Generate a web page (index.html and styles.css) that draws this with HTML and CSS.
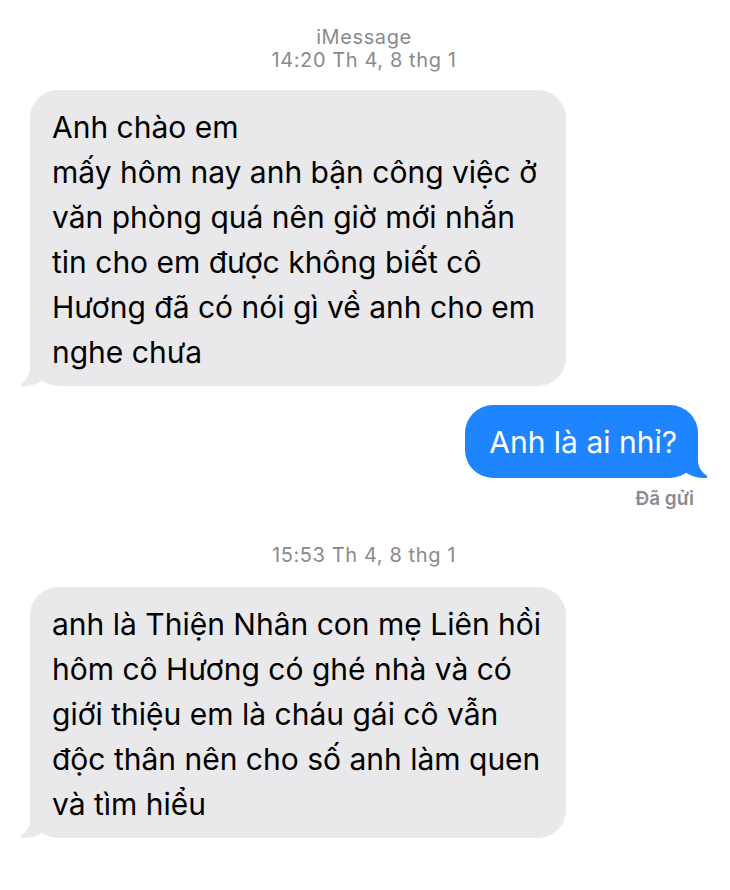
FILE: index.html
```html
<!DOCTYPE html>
<html lang="vi">
<head>
    <meta charset="UTF-8">
    <title>iMessage</title>
    <link rel="stylesheet" href="styles.css">
</head>
<body>

    <div class="chat">
        <div class="stamp stamp-first">
            <div>iMessage</div>
            <div>14:20 Th 4, 8 thg 1</div>
        </div>

        <div class="bubble received">
            Anh chào em<br>
            mấy hôm nay anh bận công việc ở<br>
            văn phòng quá nên giờ mới nhắn<br>
            tin cho em được không biết cô<br>
            Hương đã có nói gì về anh cho em<br>
            nghe chưa
        </div>

        <div class="bubble sent">Anh là ai nhỉ?</div>
        <div class="status">Đã gửi</div>

        <div class="stamp stamp-second">
            <div>15:53 Th 4, 8 thg 1</div>
        </div>

        <div class="bubble received">
            anh là Thiện Nhân con mẹ Liên hồi<br>
            hôm cô Hương có ghé nhà và có<br>
            giới thiệu em là cháu gái cô vẫn<br>
            độc thân nên cho số anh làm quen<br>
            và tìm hiểu
        </div>
    </div>

</body>
</html>
```

FILE: styles.css
```css
body {
    margin: 0;
    background: #fff;
    font-family: Inter, "Noto Sans", "DejaVu Sans", sans-serif;
    -webkit-font-smoothing: antialiased;
}
.chat {
    display: flex;
    flex-direction: column;
    width: 730px;
    padding: 26px 32px 0 30px;
    box-sizing: border-box;
}
.stamp {
    align-self: center;
    text-align: center;
    font-size: 20px;
    line-height: 23px;
    letter-spacing: 0.6px;
    color: #8a8a8e;
}
.stamp-first {
    margin-bottom: 18px;
}
.stamp-second {
    margin-top: 34px;
    margin-bottom: 20px;
}
.bubble {
    position: relative;
    padding: 15px 23px 11px 22px;
    font-size: 30px;
    line-height: 45px;
    border-radius: 28px;
    white-space: nowrap;
}
.received {
    align-self: flex-start;
    width: 536px;
    box-sizing: border-box;
    background: #e9e9eb;
    color: #000;
}
.sent {
    align-self: flex-end;
    margin-top: 19px;
    padding: 15px 21px 13px 24px;
    background: #1e85fe;
    color: #fff;
}
.bubble::before,
.bubble::after {
    content: "";
    position: absolute;
    bottom: 0;
    height: 30px;
}
.received::before {
    left: -9px;
    width: 30px;
    background: #e9e9eb;
    border-bottom-right-radius: 26px 22px;
}
.received::after {
    left: -30px;
    width: 30px;
    background: #fff;
    border-bottom-right-radius: 18px;
}
.sent::before {
    right: -9px;
    width: 30px;
    background: #1e85fe;
    border-bottom-left-radius: 26px 22px;
}
.sent::after {
    right: -30px;
    width: 30px;
    background: #fff;
    border-bottom-left-radius: 18px;
}
.status {
    align-self: flex-end;
    margin-top: 10px;
    padding-right: 4px;
    font-size: 19px;
    line-height: 22px;
    font-weight: 600;
    color: #8a8a8e;
}
```
